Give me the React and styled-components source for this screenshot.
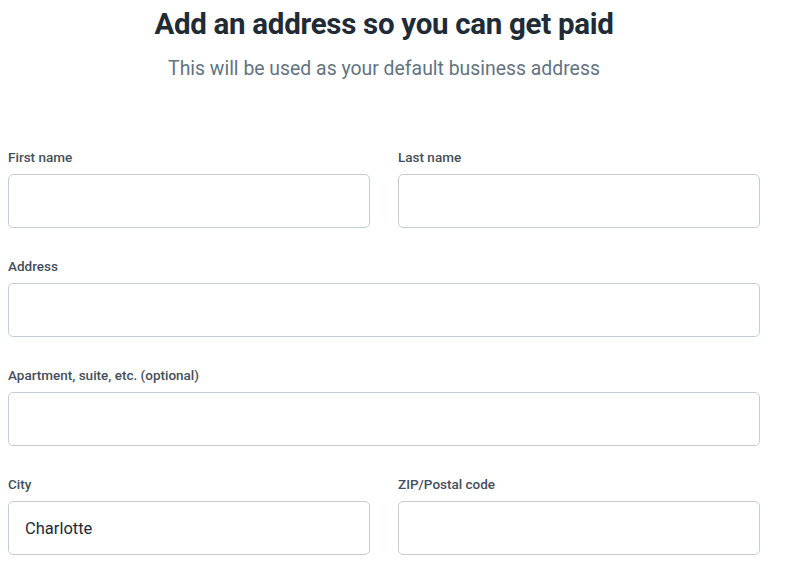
import React from "react";
import styled, { createGlobalStyle } from "styled-components";

const Global = createGlobalStyle`
  body {
    margin: 8px;
    background: #ffffff;
    font-family: Roboto, "Liberation Sans", Arial, sans-serif;
    color: #212b36;
  }
`;

const Page = styled.div`
  width: 752px;
`;

const Header = styled.header`
  text-align: center;
  margin-bottom: 70px;
`;

const Title = styled.h1`
  margin: 0;
  font-size: 29.5px;
  line-height: 32px;
  font-weight: 700;
  color: #212b36;
  letter-spacing: -0.3px;
`;

const Subtitle = styled.p`
  margin: 17px 0 0;
  font-size: 19.4px;
  line-height: 24px;
  font-weight: 400;
  color: #637381;
`;

const Form = styled.form`
  display: grid;
  grid-template-columns: 1fr 1fr;
  column-gap: 28px;
  row-gap: 31px;
  margin-top: -1px;
`;

const Field = styled.div`
  display: flex;
  flex-direction: column;
  gap: 9px;
  grid-column: ${(p) => (p.$full ? "1 / -1" : "auto")};
`;

const Label = styled.label`
  font-size: 13.5px;
  line-height: 15px;
  font-weight: 500;
  color: #454f5b;
`;

const Input = styled.input`
  box-sizing: border-box;
  height: 54px;
  width: 100%;
  padding: 0 16px;
  border: 1px solid #c4cdd5;
  border-radius: 5px;
  background: #fff;
  font-family: Roboto, "Liberation Sans", Arial, sans-serif;
  font-size: 16.5px;
  font-weight: 400;
  color: #212b36;
  outline: none;
`;

const fields = [
  { id: "first", label: "First name" },
  { id: "last", label: "Last name" },
  { id: "address", label: "Address", full: true },
  { id: "apt", label: "Apartment, suite, etc. (optional)", full: true },
  { id: "city", label: "City", value: "Charlotte" },
  { id: "zip", label: "ZIP/Postal code" },
];

export default function App() {
  return (
    <Page>
      <Global />
      <Header>
        <Title>Add an address so you can get paid</Title>
        <Subtitle>This will be used as your default business address</Subtitle>
      </Header>
      <Form>
        {fields.map((f) => (
          <Field key={f.id} $full={f.full}>
            <Label htmlFor={f.id}>{f.label}</Label>
            <Input id={f.id} defaultValue={f.value || ""} />
          </Field>
        ))}
      </Form>
    </Page>
  );
}
